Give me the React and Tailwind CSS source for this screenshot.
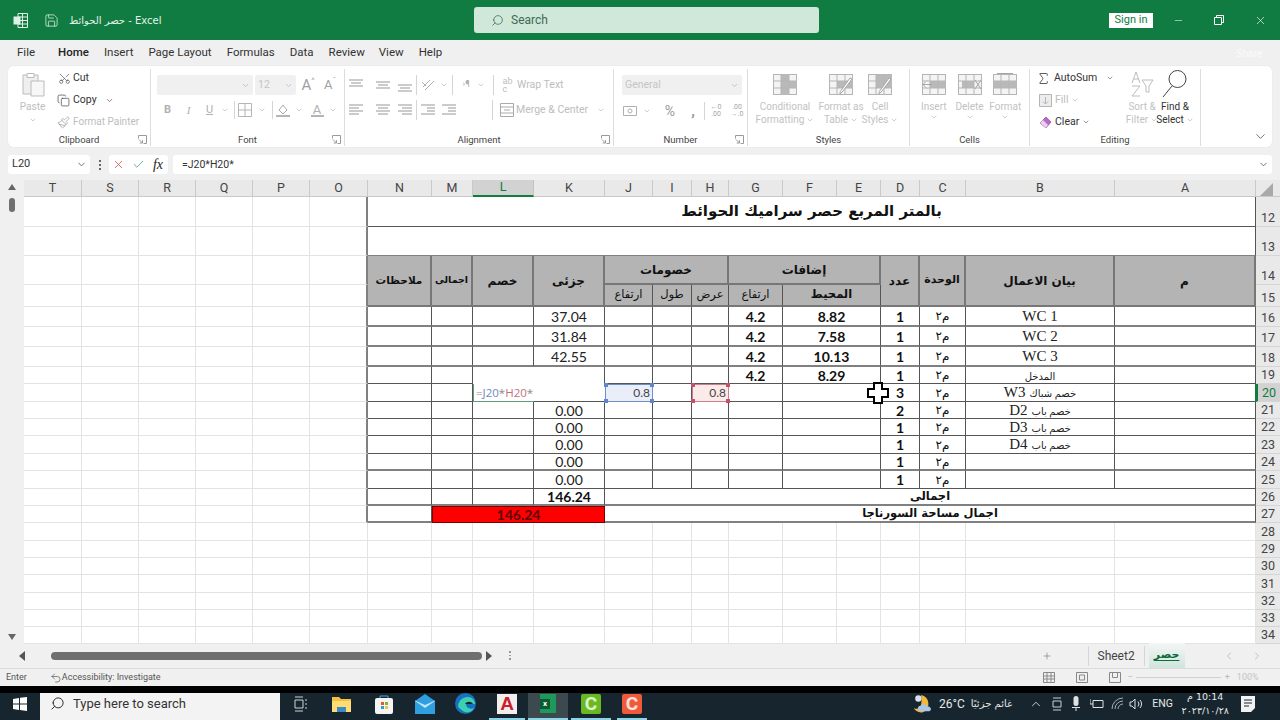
import React from "react";
import { Scissors, Copy, Paintbrush, ChevronDown, ChevronUp, ChevronLeft, ChevronRight, Search, X, Check, Minus, Plus, Sigma, Save, Undo2 } from "lucide-react";

const GRID = "border-r border-b border-[#e3e3e3]";
const V = "border-r border-r-[#555]";
const THICK = "border-b-2 border-b-[#808080]";
const THIN = "border-b border-b-[#555]";
const HEAD = "bg-[#b4b4b4] border-r-2 border-r-[#777] border-b-2 border-b-[#777] flex items-center justify-center font-bold text-[12px] text-[#111] font-['DejaVu_Sans',sans-serif]";
const SUB = "bg-[#b4b4b4] border-r border-r-[#555] border-b-2 border-b-[#777] flex items-center justify-center text-[11.5px] text-[#111] font-['DejaVu_Sans',sans-serif]";
const CENTER = "flex items-center justify-center";

const letters = ["T", "S", "R", "Q", "P", "O", "N", "M", "L", "K", "J", "I", "H", "G", "F", "E", "D", "C", "B", "A"];

const rows = [
  { n: 16, k: "37.04", g: "4.2", f: "8.82", d: "1", en: "WC 1", line: THICK },
  { n: 17, k: "31.84", g: "4.2", f: "7.58", d: "1", en: "WC 2", line: THICK },
  { n: 18, k: "42.55", g: "4.2", f: "10.13", d: "1", en: "WC 3", line: THICK },
  { n: 19, k: "", g: "4.2", f: "8.29", d: "1", ar: "المدخل", line: THIN },
  { n: 20, k: "", g: "", f: "", d: "3", ar: "خصم شباك", en: "W3", line: THIN },
  { n: 21, k: "0.00", g: "", f: "", d: "2", ar: "خصم باب", en: "D2", line: THIN },
  { n: 22, k: "0.00", g: "", f: "", d: "1", ar: "خصم باب", en: "D3", line: THIN },
  { n: 23, k: "0.00", g: "", f: "", d: "1", ar: "خصم باب", en: "D4", line: THIN },
  { n: 24, k: "0.00", g: "", f: "", d: "1", line: THICK },
  { n: 25, k: "0.00", g: "", f: "", d: "1", line: THIN },
];

// the first six columns are empty, O carries the left edge of the table
function Blanks() {
  return (
    <>
      <div className={GRID} />
      <div className={GRID} />
      <div className={GRID} />
      <div className={GRID} />
      <div className={GRID} />
      <div className="border-b border-b-[#e3e3e3] border-r-2 border-r-[#808080]" />
    </>
  );
}

function RowNo({ n, active }) {
  return (
    <div className={`flex items-end justify-center border-b border-[#d5d5d5] text-[12.5px] leading-[16px] ${active ? "bg-[#d2d2d2] text-[#107c41] border-l-2 border-l-[#107c41]" : "bg-[#e9e9e9] text-[#444]"}`}>
      {n}
    </div>
  );
}

function Handles() {
  return (
    <>
      <span className="absolute -left-[2px] -top-[2px] size-[4px] bg-current" />
      <span className="absolute -right-[2px] -top-[2px] size-[4px] bg-current" />
      <span className="absolute -left-[2px] -bottom-[2px] size-[4px] bg-current" />
      <span className="absolute -right-[2px] -bottom-[2px] size-[4px] bg-current" />
    </>
  );
}

function DataRow({ r }) {
  const cell = `${V} ${r.line}`;
  const num = `${cell} ${CENTER} font-['Lato',sans-serif] text-[14px] text-[#222]`;
  const bold = `${cell} ${CENTER} font-['Lato',sans-serif] font-bold text-[14px] text-[#111]`;
  const isEdit = r.n === 20;
  const isAbove = r.n === 19;
  return (
    <>
      <Blanks />
      <div className={cell} />
      <div className={cell} />
      {isEdit ? (
        <div className="flex items-center border-l border-b border-[#5f9c7c] pl-[2px] text-[11.5px] font-['Open_Sans',sans-serif]">
          <span className="whitespace-nowrap text-[#888]">=<span className="text-[#6f88bd]">J20</span>*<span className="text-[#c0727a]">H20</span>*</span>
        </div>
      ) : (
        <div className={isAbove ? "" : cell} />
      )}
      {isEdit ? (
        <div className={THIN} />
      ) : (
        <div className={isAbove ? V : num}>{r.k}</div>
      )}
      {isEdit ? (
        <div className="relative flex items-center justify-end border border-[#6d8fc9] bg-[#e9eef8] pr-[2px] font-['Lato',sans-serif] text-[12px] text-[#5f86c8]">
          <Handles />
          <span className="text-[#444]">0.8</span>
        </div>
      ) : (
        <div className={cell} />
      )}
      <div className={cell} />
      {isEdit ? (
        <div className="relative flex items-center justify-end border border-[#cf7f8c] bg-[#fbeaea] pr-[2px] font-['Lato',sans-serif] text-[12px] text-[#c4506a]">
          <Handles />
          <span className="text-[#444]">0.8</span>
        </div>
      ) : (
        <div className={cell} />
      )}
      <div className={bold}>{r.g}</div>
      <div className={`col-span-2 ${bold}`}>{r.f}</div>
      <div className={bold}>{r.d}</div>
      <div className={`${cell} ${CENTER} font-['DejaVu_Sans',sans-serif] text-[12px] text-[#111]`} dir="rtl">م٢</div>
      <div className={`${cell} ${CENTER} gap-[4px] font-['Liberation_Serif','DejaVu_Sans',serif] text-[#222]`} dir="rtl">
        {r.ar && <span className="pt-[2px] text-[10px]">{r.ar}</span>}
        {r.en && <span className="text-[15px]">{r.en}</span>}
      </div>
      <div className={`${r.line} ${isEdit ? "border-r border-r-[#107c41]" : "border-r border-r-[#555]"}`} />
      <RowNo n={r.n} active={isEdit} />
    </>
  );
}

function Sheet() {
  return (
    <div className="grid h-[463px] grid-cols-[58px_57px_57px_57px_57px_58px_64px_41px_61px_71px_48px_39px_37px_54px_54px_44px_39px_46px_149px_141px_24px] grid-rows-[17px_30px_29px_29px_22px_20px_20px_20px_17px_18px_17px_17px_18px_17px_18px_17px_17px_18px_17px_17px_18px_17px_17px_17px] bg-white">
      {letters.map((c) => (
        <div key={c} className={`flex items-center justify-center border-r border-b text-[12.5px] ${c === "L" ? "bg-[#d2d2d2] border-b-2 border-b-[#107c41] text-[#107c41] border-r-[#c4c4c4]" : "bg-[#e9e9e9] border-[#c9c9c9] text-[#444]"}`}>
          {c}
        </div>
      ))}
      <div className="flex items-center justify-center bg-[#e9e9e9] border-b border-[#c9c9c9]">
        <span className="mt-[3px] mr-[4px] size-0 border-b-[13px] border-l-[13px] border-b-[#a9a9a9] border-l-transparent" />
      </div>

      <Blanks />
      <div className="col-span-14 flex items-center justify-center border-r border-r-[#555] border-b border-b-[#555] pb-[1px] font-['DejaVu_Sans',sans-serif] text-[15px] font-bold text-[#111]" dir="rtl">
        بالمتر المربع حصر سراميك الحوائط
      </div>
      <RowNo n={12} />

      <Blanks />
      <div className="col-span-14 border-r border-r-[#555] border-b border-b-[#808080]" />
      <RowNo n={13} />

      <Blanks />
      <div className={`row-span-2 ${HEAD} !text-[10.5px]`}>ملاحظات</div>
      <div className={`row-span-2 ${HEAD} !text-[9.5px]`}>اجمالى</div>
      <div className={`row-span-2 ${HEAD}`}>خصم</div>
      <div className={`row-span-2 ${HEAD}`}>جزئى</div>
      <div className={`col-span-3 ${HEAD}`}>خصومات</div>
      <div className={`col-span-3 ${HEAD}`}>إضافات</div>
      <div className={`row-span-2 ${HEAD}`}>عدد</div>
      <div className={`row-span-2 ${HEAD} !text-[11px]`}>الوحدة</div>
      <div className={`row-span-2 ${HEAD}`}>بيان الاعمال</div>
      <div className={`row-span-2 ${HEAD}`}>م</div>
      <RowNo n={14} />

      <Blanks />
      <div className={SUB}>ارتفاع</div>
      <div className={SUB}>طول</div>
      <div className={SUB}>عرض</div>
      <div className={SUB}>ارتفاع</div>
      <div className={`col-span-2 ${SUB} font-bold`}>المحيط</div>
      <RowNo n={15} />

      {rows.map((r) => (
        <DataRow key={r.n} r={r} />
      ))}

      <Blanks />
      <div className={`${V} ${THICK}`} />
      <div className={`${V} ${THICK}`} />
      <div className={`${V} ${THICK}`} />
      <div className={`${V} ${THICK} ${CENTER} font-['Lato',sans-serif] text-[14px] font-bold text-[#111]`}>146.24</div>
      <div className={`col-span-10 ${THICK} border-r border-r-[#555] ${CENTER} font-['DejaVu_Sans',sans-serif] text-[11.5px] font-bold text-[#111]`}>اجمالى</div>
      <RowNo n={26} />

      <Blanks />
      <div className={`${V} border-b-2 border-b-[#808080]`} />
      <div className={`col-span-3 border border-[#7a0000] bg-[#ff0000] ${CENTER} font-['Lato',sans-serif] text-[14px] font-bold text-[#5c0505]`}>146.24</div>
      <div className={`col-span-10 border-b-2 border-b-[#808080] border-r border-r-[#555] ${CENTER} font-['DejaVu_Sans',sans-serif] text-[11.5px] font-bold text-[#111]`} dir="rtl">اجمال مساحة السورناجا</div>
      <RowNo n={27} />

      {[28, 29, 30, 31, 32, 33, 34].map((n) => (
        <React.Fragment key={n}>
          {letters.map((c) => (
            <div key={c} className={GRID} />
          ))}
          <RowNo n={n} />
        </React.Fragment>
      ))}
    </div>
  );
}

function Lines({ rows: lines }) {
  return (
    <svg width="16" height="14" viewBox="0 0 16 14" stroke="#a8a8a8" strokeWidth="1.2">
      {lines.map((l, i) => (
        <line key={i} x1={l[0]} x2={l[1]} y1={l[2]} y2={l[2]} />
      ))}
    </svg>
  );
}

function Mini({ className = "size-[9px]" }) {
  return <ChevronDown className={`${className} text-[#b5b5b5]`} strokeWidth={2} />;
}

function Launcher() {
  return (
    <svg width="9" height="9" viewBox="0 0 9 9" fill="none" stroke="#9a9a9a" strokeWidth="1">
      <path d="M.5 3.5v-3h8v8h-3M1 4.5l3.5 3.5M4.5 5.2V8H1.700" />
    </svg>
  );
}

function Group({ w, label, launcher, children }) {
  return (
    <div className={`${w} flex h-[77px] shrink-0 flex-col border-r border-[#dcdcdc]`}>
      <div className="flex-1">{children}</div>
      <div className="relative flex h-[12px] items-center justify-center text-[9.5px] leading-[12px] text-[#444]">
        {label}
        {launcher && (
          <span className="absolute right-[3px] top-[1px]">
            <Launcher />
          </span>
        )}
      </div>
    </div>
  );
}

function GridIcon({ w = 24, fills = [], extra }) {
  return (
    <svg width={w} height="22" viewBox={`0 0 ${w} 22`} fill="#f4f4f4" stroke="#b5b5b5" strokeWidth="1">
      <rect x=".5" y="1.500" width="23" height="20" />
      {fills.map((f, i) => (
        <rect key={i} x={f[0]} y={f[1]} width={f[2]} height={f[3]} fill="#b9b9b9" stroke="none" />
      ))}
      <path d="M.5 8h23M.5 15h23M8 1.500v20M16 1.500v20" fill="none" />
      {extra}
    </svg>
  );
}

const brush = <path d="M23 6L14 18l-3 3c0-2 .5-3 1.500-4L21 5z" fill="#fff" stroke="#a5a5a5" />;

function BigButton({ w, icon, top, bottom, dark }) {
  return (
    <div className={`${w} flex flex-col items-center text-[10px] leading-[13px] ${dark ? "text-[#333]" : "text-[#c2c2c2]"}`}>
      <span className="flex h-[30px] items-center">{icon}</span>
      <span className="mt-[1px] whitespace-nowrap">{top}</span>
      <span className="flex items-center gap-[2px] whitespace-nowrap">
        {bottom}
        <Mini className="size-[8px]" />
      </span>
    </div>
  );
}

function Ribbon() {
  const tl = [[1, 15, 2], [3, 13, 5], [1, 15, 8]];
  const mid = [[1, 15, 4], [3, 13, 7], [1, 15, 10]];
  const bot = [[1, 15, 7], [3, 13, 10], [1, 15, 13]];
  const l1 = [[1, 15, 2], [1, 11, 5], [1, 15, 8], [1, 11, 11]];
  const l2 = [[1, 15, 2], [3, 13, 5], [1, 15, 8], [3, 13, 11]];
  const l3 = [[1, 15, 2], [5, 15, 5], [1, 15, 8], [5, 15, 11]];
  const ind = [[1, 15, 2], [7, 15, 5], [7, 15, 8], [1, 15, 11]];
  return (
    <div className="mx-[8px] flex h-[81px] w-[1264px] rounded-[5px] bg-white pt-[3px] shadow-[0_0_1px_#ccc]">
      <Group w="w-[143px]" label="Clipboard" launcher>
        <div className="flex">
          <div className="flex w-[49px] flex-col items-center pt-[2px] text-[10px] leading-[13px] text-[#bdbdbd]">
            <svg width="26" height="26" viewBox="0 0 26 26" fill="#efefef" stroke="#bbb">
              <path d="M3 4h15v19H3z" />
              <path d="M7 2.500h7v4H7z" fill="#fff" />
              <path d="M11 10h13v15H11z" fill="#f7f7f7" />
            </svg>
            <span className="mt-[3px]">Paste</span>
            <Mini className="mt-[3px] size-[8px]" />
          </div>
          <div className="flex flex-col gap-[4px] text-[10.5px] leading-[18px] text-[#333]">
            <div className="flex h-[18px] items-center gap-[2px] pl-[1px]">
              <Scissors className="size-[13px] -rotate-90 text-[#555]" strokeWidth={1.3} />
              <span>Cut</span>
            </div>
            <div className="flex h-[18px] items-center gap-[3px]">
              <Copy className="size-[13px] text-[#444]" strokeWidth={1.3} />
              <span>Copy</span>
              <ChevronDown className="ml-[5px] size-[9px] text-[#666]" />
            </div>
            <div className="flex h-[18px] items-center gap-[3px] text-[#bdbdbd]">
              <Paintbrush className="size-[13px] text-[#a5a5a5]" strokeWidth={1.5} />
              <span className="whitespace-nowrap text-[10px]">Format Painter</span>
            </div>
          </div>
        </div>
      </Group>

      <Group w="w-[194px]" label="Font" launcher>
        <div className="flex items-center pl-[6px] pt-[6px]">
          <div className="flex h-[20px] w-[96px] items-center justify-end rounded-[2px] bg-[#f0f0f0] pr-[3px]"><Mini /></div>
          <div className="ml-[2px] flex h-[20px] w-[41px] items-center justify-between rounded-[2px] bg-[#f0f0f0] px-[3px] text-[10.5px] text-[#c5c5c5]">12<Mini /></div>
          <span className="ml-[2px] flex w-[20px] items-start justify-center text-[15px] leading-[18px] text-[#a0a0a0]">A<span className="text-[8px] leading-[10px]">^</span></span>
          <span className="ml-[2px] flex w-[20px] items-start justify-center text-[13px] leading-[18px] text-[#a0a0a0]">A<span className="text-[8px] leading-[10px]">ˇ</span></span>
        </div>
        <div className="mt-[5px] flex h-[20px] items-center pl-[6px] text-[11px] text-[#b0b0b0]">
          <span className="w-[21px] text-center font-bold">B</span>
          <span className="w-[21px] text-center italic font-['Liberation_Serif',serif]">I</span>
          <span className="w-[21px] text-center underline">U</span>
          <span className="flex w-[10px] justify-center"><Mini className="size-[8px]" /></span>
          <span className="ml-[4px] h-[18px] border-l border-[#d5d5d5]" />
          <span className="ml-[2px] flex w-[16px] justify-center">
            <svg width="14" height="14" viewBox="0 0 14 14" fill="none" stroke="#b5b5b5"><path d="M.5.5h13v13H.5zM7 .5v13M.5 7h13" /></svg>
          </span>
          <span className="ml-[3px] flex w-[12px] justify-center"><Mini className="size-[8px]" /></span>
          <span className="ml-[4px] h-[18px] border-l border-[#d5d5d5]" />
          <span className="ml-[2px] flex w-[16px] justify-center">
            <svg width="14" height="15" viewBox="0 0 14 15" fill="none" stroke="#aaa"><path d="M3 7l4-5 4 5-4 4z" /><path d="M0 13h14" strokeWidth="2" stroke="#b4b4b4" /></svg>
          </span>
          <span className="ml-[2px] flex w-[12px] justify-center"><Mini className="size-[8px]" /></span>
          <span className="ml-[4px] flex w-[16px] flex-col items-center leading-[11px] text-[13px]">A<span className="h-[2px] w-[13px] bg-[#b4b4b4]" /></span>
          <span className="ml-[2px] flex w-[12px] justify-center"><Mini className="size-[8px]" /></span>
        </div>
      </Group>

      <Group w="w-[269px]" label="Alignment" launcher>
        <div className="flex h-[30px] items-center pt-[2px]">
          <span className="flex w-[22px] justify-center"><Lines rows={tl} /></span>
          <span className="ml-[5px] flex w-[22px] justify-center"><Lines rows={mid} /></span>
          <span className="flex w-[22px] justify-center"><Lines rows={bot} /></span>
          <span className="h-[20px] border-l border-[#d5d5d5]" />
          <span className="flex w-[22px] justify-center">
            <svg width="15" height="14" viewBox="0 0 15 14" fill="none" stroke="#b0b0b0"><path d="M2 9L9 2M4 12l9-9M1 4l4 4" /></svg>
          </span>
          <span className="flex w-[10px] justify-center"><Mini className="size-[8px]" /></span>
          <span className="ml-[3px] h-[20px] border-l border-[#d5d5d5]" />
          <span className="ml-[3px] flex w-[20px] justify-center text-[9px] text-[#b0b0b0]">›¶</span>
          <span className="flex w-[10px] justify-center"><Mini className="size-[8px]" /></span>
          <span className="ml-[7px] h-[20px] border-l border-[#d5d5d5]" />
          <div className="ml-[5px] flex items-center gap-[1px] text-[10.5px] text-[#bdbdbd]">
            <span className="flex w-[17px] justify-center text-[9px] leading-[8px]">ab<br />c</span>
            <span>Wrap Text</span>
          </div>
        </div>
        <div className="flex h-[22px] items-center">
          <span className="flex w-[22px] justify-center"><Lines rows={l1} /></span>
          <span className="ml-[5px] flex w-[22px] justify-center"><Lines rows={l2} /></span>
          <span className="flex w-[22px] justify-center"><Lines rows={l3} /></span>
          <span className="h-[20px] border-l border-[#d5d5d5]" />
          <span className="flex w-[22px] justify-center"><Lines rows={ind} /></span>
          <span className="flex w-[20px] justify-center"><Lines rows={ind} /></span>
          <span className="ml-[33px] h-[20px] border-l border-[#d5d5d5]" />
          <div className="ml-[5px] flex items-center gap-[1px] text-[10.5px] text-[#bdbdbd]">
            <span className="flex w-[17px] justify-center">
              <svg width="14" height="14" viewBox="0 0 14 14" fill="none" stroke="#aaa"><path d="M.5.5h13v13H.5zM.5 4h13M.5 10h13M4 7h6" /></svg>
            </span>
            <span className="whitespace-nowrap">Merge &amp; Center</span>
            <Mini className="ml-[8px] size-[8px]" />
          </div>
        </div>
      </Group>

      <Group w="w-[134px]" label="Number" launcher>
        <div className="pl-[8px] pt-[6px]">
          <div className="flex h-[20px] w-[120px] items-center justify-between rounded-[2px] bg-[#f0f0f0] px-[3px] text-[10.5px] text-[#c5c5c5]">General<Mini /></div>
        </div>
        <div className="mt-[6px] flex h-[20px] items-center pl-[8px] text-[#8a8a8a]">
          <span className="flex w-[16px] justify-center">
            <svg width="14" height="14" viewBox="0 0 14 14" fill="none" stroke="#b0b0b0"><path d="M.5 2.500h13v9H.5z" /><circle cx="7" cy="7" r="2" /></svg>
          </span>
          <span className="ml-[4px] flex w-[10px] justify-center"><Mini className="size-[8px]" /></span>
          <span className="ml-[9px] w-[18px] text-center text-[14px] text-[#999]">%</span>
          <span className="ml-[5px] w-[18px] text-center text-[15px] font-bold leading-[14px] text-[#999]">,</span>
          <span className="ml-[2px] h-[18px] border-l border-[#d5d5d5]" />
          <span className="ml-[1px] w-[20px] text-center text-[7px] leading-[7px] text-[#a5a5a5]">←0<br />.00</span>
          <span className="ml-[1px] w-[20px] text-center text-[7px] leading-[7px] text-[#a5a5a5]">.00<br />→.0</span>
        </div>
      </Group>

      <Group w="w-[162px]" label="Styles">
        <div className="flex">
          <BigButton w="w-[74px]" icon={<GridIcon fills={[[8, 1, 8, 7], [8, 8, 16, 7], [8, 15, 8, 7]]} />} top="Conditional" bottom="Formatting" />
          <BigButton w="w-[38px]" icon={<GridIcon fills={[[8, 8, 16, 7]]} extra={brush} />} top="Format as" bottom="Table" />
          <BigButton w="w-[40px]" icon={<GridIcon fills={[[8, 1, 16, 14]]} extra={brush} />} top="Cell" bottom="Styles" />
        </div>
      </Group>

      <Group w="w-[120px]" label="Cells">
        <div className="flex">
          <BigButton w="w-[48px]" icon={<GridIcon fills={[[8, 8, 16, 7]]} extra={<path d="M10 11.500H1M5 7.500l-4 4 4 4" fill="#fff" stroke="#a5a5a5" />} />} top="Insert" />
          <BigButton w="w-[24px]" icon={<GridIcon fills={[[4, 8, 12, 7]]} extra={<path d="M17 7l6 9M23 7l-6 9" fill="none" stroke="#a5a5a5" />} />} top="Delete" />
          <BigButton w="w-[48px]" icon={<GridIcon fills={[[0, 8, 24, 7]]} extra={<path d="M4 .5h16" stroke="#a5a5a5" />} />} top="Format" />
        </div>
      </Group>

      <Group w="w-[171px]" label="Editing">
        <div className="flex">
          <div className="flex w-[95px] flex-col gap-[4px] pl-[6px] text-[10.5px] leading-[18px] text-[#333]">
            <div className="flex h-[18px] items-center gap-[3px]">
              <Sigma className="size-[15px] text-[#444]" strokeWidth={1.4} />
              <span>AutoSum</span>
              <ChevronDown className="ml-[6px] size-[8px] text-[#666]" />
            </div>
            <div className="flex h-[18px] items-center gap-[3px] pl-[3px] text-[#bdbdbd]">
              <svg width="13" height="13" viewBox="0 0 13 13" fill="#ececec" stroke="#b5b5b5"><path d="M.5.5h12v12H.5z" /><path d="M6.500 3v7M4 7.500l2.500 2.500L9 7.500" fill="none" /></svg>
              <span>Fill</span>
              <Mini className="size-[8px]" />
            </div>
            <div className="flex h-[18px] items-center gap-[3px] pl-[3px]">
              <svg width="13" height="13" viewBox="0 0 13 13"><path d="M7 1l5 5-5 6-6-5z" fill="#b66bc2" stroke="#8e4a9a" strokeWidth=".7" /><path d="M1 7l3-3 5 5-2 3z" fill="#eccdf0" /></svg>
              <span>Clear</span>
              <ChevronDown className="size-[8px] text-[#666]" />
            </div>
          </div>
          <BigButton
            w="w-[34px]"
            icon={<svg width="24" height="28" viewBox="0 0 24 28" fill="none" stroke="#bdbdbd"><path d="M2 13L6 2l4 11M3.500 9h5M2 16h8L2 26h8M12 10h11l-4 6v6h-3v-6z" /></svg>}
            top="Sort &"
            bottom="Filter"
          />
          <BigButton
            w="w-[32px]"
            dark
            icon={<svg width="26" height="30" viewBox="0 0 26 30" fill="none" stroke="#444"><circle cx="15.500" cy="10" r="8.500" /><path d="M10 17L1 28" /></svg>}
            top="Find &"
            bottom="Select"
          />
        </div>
      </Group>
      <div className="flex flex-1 items-end justify-end pb-[3px] pr-[4px]">
        <ChevronDown className="size-[15px] text-[#555]" strokeWidth={1.3} />
      </div>
    </div>
  );
}

function Running() {
  return <span className="absolute -bottom-[6px] left-[3px] right-[3px] h-[2px] bg-[#8fd3e8]" />;
}

function Taskbar() {
  return (
    <div className="flex h-[27px] items-center bg-[#17262e] pb-[6px] text-white">
      <div className="flex w-[40px] justify-center">
        <svg width="14" height="14" viewBox="0 0 14 14" fill="#fff"><path d="M0 2l6-1v5.500H0zM7 .8L14 0v6.500H7zM0 7.500h6V13l-6-1zM7 7.500h7V14l-7-1z" /></svg>
      </div>
      <div className="-mb-[6px] flex h-[27px] w-[240px] items-center gap-[8px] bg-[#f3f3f3] pb-[6px] pl-[10px] text-[13px] text-[#333]">
        <Search className="size-[15px] -scale-x-100 text-[#222]" strokeWidth={1.5} />
        Type here to search
      </div>
      <div className="flex w-[40px] justify-center">
        <svg width="14" height="16" viewBox="0 0 14 16" fill="none" stroke="#cfd4d6"><path d="M2 1h8M2 15h8M2 4h8v8H2zM13 3v2M13 7v2M13 11v2" /></svg>
      </div>
      <div className="flex w-[43px] justify-center">
        <svg width="19" height="17" viewBox="0 0 19 17"><path d="M0 2h7l2 2h10v13H0z" fill="#f4c23e" /><path d="M0 6h19v11H0z" fill="#ffdc75" /><path d="M5 17v-5h9v5" fill="#3a8ac4" /></svg>
      </div>
      <div className="flex w-[41px] justify-center">
        <svg width="18" height="20" viewBox="0 0 18 20"><path d="M5 5V2h8v3" fill="none" stroke="#4aa8d8" /><rect y="4" width="18" height="16" rx="2" fill="#f4f4f4" /><rect x="6" y="8" width="3" height="3" fill="#e8552c" /><rect x="10" y="8" width="3" height="3" fill="#7fb82e" /><rect x="6" y="12" width="3" height="3" fill="#2d9cdb" /><rect x="10" y="12" width="3" height="3" fill="#f4c23e" /></svg>
      </div>
      <div className="flex w-[41px] justify-center">
        <svg width="20" height="20" viewBox="0 0 20 20"><path d="M0 7l10-7 10 7v13H0z" fill="#2f9fe0" /><path d="M0 7l10 7 10-7v-.5L10 11 0 6.500z" fill="#bfe6fa" /></svg>
      </div>
      <div className="flex w-[41px] justify-center">
        <svg width="21" height="21" viewBox="0 0 21 21"><circle cx="10.500" cy="10.500" r="10.500" fill="#1770c0" /><path d="M3 13C4 6 9 4 13 4c4 0 7 3 7 7h-9c0 3 3 6 8 4-2 4-7 6-11 3-3-2-5-4-5-5z" fill="#3bd0b0" /><path d="M10 11c2-3 6-3 8 0z" fill="#17262e" /></svg>
      </div>
      <div className="relative flex w-[42px] justify-center">
        <div className="flex h-[20px] w-[20px] items-center justify-center bg-[#f3eeee] font-['Liberation_Sans',sans-serif] text-[19px] font-bold leading-none text-[#c8202c]">A</div>
        <Running />
      </div>
      <div className="relative -mb-[6px] flex h-[27px] w-[40px] items-center justify-center bg-[#3c4a50] pb-[6px]">
        <div className="flex h-[19px] w-[16px] items-center bg-[#1d9a5a]">
          <span className="flex size-[10px] items-center justify-center bg-[#0b5c32] text-[8px] font-bold text-white">x</span>
        </div>
        <span className="absolute bottom-0 left-0 right-0 h-[2px] bg-[#8fd3e8]" />
      </div>
      <div className="relative flex w-[46px] justify-center">
        <div className="flex h-[20px] w-[20px] items-center justify-center rounded-[2px] bg-[#69b922] text-[19px] font-bold leading-none text-[#dff3c8]">C</div>
        <Running />
      </div>
      <div className="relative flex w-[36px] justify-center">
        <div className="flex h-[20px] w-[20px] items-center justify-center rounded-[2px] bg-[#ef5a3c] text-[19px] font-bold leading-none text-[#fde0d8]">C</div>
        <Running />
      </div>

      <div className="ml-[262px] flex w-[20px] justify-center">
        <svg width="20" height="20" viewBox="0 0 20 22"><path d="M9 1a10 10 0 0 1 2 19C7 21 3 19 1 16c6 1 10-2 8-15z" fill="#f0b93a" /><circle cx="6" cy="5" r="3.500" fill="#d6e3ef" /><path d="M8 19a3 3 0 0 1 1-6 4 4 0 0 1 7 1 2.500 2.500 0 0 1 2 5z" fill="#a8c6e8" /></svg>
      </div>
      <span className="ml-[7px] text-[12px] text-[#e8e8e8]">26°C</span>
      <span className="ml-[6px] whitespace-nowrap font-['DejaVu_Sans',sans-serif] text-[10px] text-[#e8e8e8]" dir="rtl">غائم جزئيًا</span>
      <ChevronUp className="ml-[17px] size-[14px] text-[#dfe2e3]" strokeWidth={1.5} />
      <span className="ml-[8px] flex w-[12px] justify-center">
        <svg width="10" height="14" viewBox="0 0 10 14" fill="none" stroke="#ccd"><path d="M1 1h8M1 13h8M1 4h8v6H1z" /></svg>
      </span>
      <span className="ml-[8px] flex w-[10px] justify-center">
        <svg width="8" height="15" viewBox="0 0 8 15" fill="#dfe2e3"><rect x="1.500" width="5" height="10" rx="2.500" /><path d="M0 11h8v1H0zM3.500 12h1v3h-1z" /></svg>
      </span>
      <span className="ml-[9px] flex w-[14px] justify-center">
        <svg width="14" height="10" viewBox="0 0 14 10" fill="none" stroke="#dfe2e3"><path d="M3 1.500h10v7H3zM0 0v5h3" /></svg>
      </span>
      <span className="ml-[6px] flex w-[14px] justify-center">
        <svg width="13" height="13" viewBox="0 0 13 13" fill="none" stroke="#aab"><path d="M1 12A11 11 0 0 1 12 1M4 12a8 8 0 0 1 8-8M7 12a5 5 0 0 1 5-5" /></svg>
      </span>
      <span className="ml-[5px] flex w-[14px] justify-center">
        <svg width="14" height="12" viewBox="0 0 14 12" fill="none" stroke="#dfe2e3"><path d="M1 4h2l3-3v10L3 8H1zM9 3.500a4 4 0 0 1 0 5M11 2a6 6 0 0 1 0 8" /></svg>
      </span>
      <span className="ml-[9px] w-[21px] text-[10.5px] text-[#e8e8e8]">ENG</span>
      <div className="ml-[2px] flex w-[60px] flex-col items-center font-['DejaVu_Sans',sans-serif] text-[9.5px] leading-[14px] text-[#e8e8e8]">
        <span dir="rtl">10:14 م</span>
        <span>٢٠٢٣/١٠/٢٨</span>
      </div>
      <span className="ml-[3px] flex w-[20px] justify-center">
        <svg width="14" height="16" viewBox="0 0 14 16" fill="#f2f2f2"><path d="M0 0h14v12l-4 4H0z" /><path d="M3 4h8M3 7h8M3 10h5" stroke="#17262e" /></svg>
      </span>
    </div>
  );
}

export default function App() {
  return (
    <div className="relative flex h-[720px] w-[1280px] flex-col overflow-hidden bg-[#f0f0f0] font-['Roboto',sans-serif]">
      <div className="flex h-[40px] shrink-0 items-center bg-[#107c41] text-white">
        <div className="flex w-[38px] justify-center pl-[2px]">
          <svg width="15" height="15" viewBox="0 0 15 15" fill="none" stroke="#dff0e6"><path d="M5 .5h9.500v14H5zM5 4h9.500M5 7.500h9.500M5 11h9.500M9.500.5v14" /><rect x=".5" y="3.500" width="7" height="8" fill="#dff0e6" stroke="none" /></svg>
        </div>
        <Save className="ml-[6px] size-[15px] text-[#e4f1ea]" strokeWidth={1.2} />
        <span className="ml-[10px] w-[100px] whitespace-nowrap text-[10px] text-[#e4f1ea] font-['DejaVu_Sans','Roboto',sans-serif]">حصر الحوائط  -  Excel</span>
        <div className="ml-[305px] flex h-[26px] w-[345px] items-center gap-[7px] rounded-[3px] bg-[#cfe8da] pl-[17px] text-[12px] text-[#3f6a53]">
          <Search className="size-[13px] -scale-x-100" strokeWidth={1.4} />
          Search
        </div>
        <div className="ml-[290px] flex h-[15px] w-[44px] items-center justify-center bg-white text-[11px] text-[#107c41]">Sign in</div>
        <Minus className="ml-[20px] size-[11px]" strokeWidth={1.2} />
        <svg className="ml-[30px]" width="10" height="10" viewBox="0 0 10 10" fill="none" stroke="#fff"><path d="M.5 2.500h7v7h-7zM2.500 2.500V.5h7v7H7.500" /></svg>
        <X className="ml-[30px] size-[13px]" strokeWidth={1.2} />
      </div>

      <div className="flex h-[26px] shrink-0 items-center justify-between pl-[17px] pr-[18px] text-[11.5px] text-[#333]">
        <div className="flex items-center">
          <span>File</span>
          <span className="ml-[23px] font-medium text-[#222]">Home</span>
          <span className="ml-[15px]">Insert</span>
          <span className="ml-[15px]">Page Layout</span>
          <span className="ml-[15px]">Formulas</span>
          <span className="ml-[15px]">Data</span>
          <span className="ml-[15px]">Review</span>
          <span className="ml-[14px]">View</span>
          <span className="ml-[15px]">Help</span>
        </div>
        <span className="text-[10px] text-[#fafafa]">Share</span>
      </div>

      <Ribbon />

      <div className="mt-[8px] flex h-[19px] shrink-0 items-stretch px-[8px] text-[11px] text-[#333]">
        <div className="flex w-[82px] items-center justify-between rounded-[3px] bg-white pl-[4px] pr-[3px]">
          L20
          <ChevronDown className="size-[11px] text-[#666]" />
        </div>
        <div className="flex w-[19px] flex-col items-center justify-center gap-[2px]">
          <span className="size-[2px] bg-[#666]" />
          <span className="size-[2px] bg-[#666]" />
          <span className="size-[2px] bg-[#666]" />
        </div>
        <div className="flex w-[59px] items-center justify-between rounded-[3px] bg-white px-[3px]">
          <X className="size-[13px] text-[#d24a3f]" strokeWidth={1.4} />
          <Check className="size-[13px] text-[#3d9a5f]" strokeWidth={1.4} />
          <span className="pr-[2px] font-['Liberation_Serif',serif] text-[14px] italic text-[#222]">fx</span>
        </div>
        <div className="ml-[5px] flex flex-1 items-center justify-between rounded-[3px] bg-white pl-[9px] pr-[3px] text-[10.5px]">
          =J20*H20*
          <ChevronDown className="size-[11px] text-[#666]" />
        </div>
      </div>

      <div className="mt-[6px] flex shrink-0">
        <div className="flex h-[463px] w-[24px] shrink-0 flex-col items-center bg-[#f0f0f0] pr-[1px] text-[#666]">
          <span className="mt-[4px] size-0 border-x-[4px] border-b-[6px] border-x-transparent border-b-[#666]" />
          <span className="mt-[8px] h-[14px] w-[6px] rounded-full bg-[#6f6f6f]" />
          <span className="mt-auto mb-[3px] size-0 border-x-[4px] border-t-[6px] border-x-transparent border-t-[#666]" />
        </div>
        <Sheet />
      </div>

      <div className="flex h-[25px] shrink-0 items-center text-[12px] text-[#444]">
        <span className="ml-[19px] size-0 border-y-[5px] border-r-[6px] border-y-transparent border-r-[#555]" />
        <span className="ml-[26px] h-[8px] w-[431px] rounded-full bg-[#6f6f6f]" />
        <span className="ml-[4px] size-0 border-y-[5px] border-l-[6px] border-y-transparent border-l-[#555]" />
        <span className="ml-[17px] flex flex-col gap-[2px]">
          <span className="size-[1.5px] bg-[#999]" />
          <span className="size-[1.5px] bg-[#999]" />
          <span className="size-[1.5px] bg-[#999]" />
        </span>
        <Plus className="ml-[531px] size-[10px] text-[#777]" strokeWidth={1.5} />
        <span className="ml-[36px] h-[20px] border-l border-[#d5d5d5]" />
        <span className="ml-[9px] text-[12px] text-[#444]">Sheet2</span>
        <span className="ml-[9px] h-[20px] border-l border-[#d5d5d5]" />
        <span className="ml-[4px] flex h-full w-[36px] items-center justify-center bg-gradient-to-b from-[#f4f6f5] to-[#cfe5dc] font-['DejaVu_Sans',sans-serif] text-[11px] font-bold text-[#0f6b3a] underline underline-offset-2">حصر</span>
        <ChevronLeft className="ml-[38px] size-[12px] text-[#c2c2c2]" />
        <ChevronRight className="ml-[16px] size-[12px] text-[#c2c2c2]" />
      </div>

      <div className="flex h-[18px] shrink-0 items-center border-t border-[#dbdbdb] text-[9px] text-[#555]">
        <span className="ml-[6px]">Enter</span>
        <Undo2 className="ml-[23px] size-[12px] text-[#555]" strokeWidth={1.4} />
        <span>Accessibility: Investigate</span>
        <span className="ml-[881px] flex w-[14px] justify-center">
          <svg width="12" height="11" viewBox="0 0 12 11" fill="none" stroke="#888"><path d="M.5.5h11v10H.5zM4 .5v10M8 .5v10M.5 4h11M.5 7h11" /></svg>
        </span>
        <span className="ml-[19px] flex w-[14px] justify-center">
          <svg width="12" height="11" viewBox="0 0 12 11" fill="none" stroke="#888"><path d="M.5.5h11v10H.5zM3.500 3h5v5h-5z" /></svg>
        </span>
        <span className="ml-[19px] flex w-[14px] justify-center">
          <svg width="12" height="11" viewBox="0 0 12 11" fill="none" stroke="#888"><path d="M.5.5h11v10H.5zM3.500.5v5h5v-5" /></svg>
        </span>
        <span className="ml-[6px] text-[#bbb]">−</span>
        <span className="ml-[3px] h-px w-[85px] bg-[#d0d0d0]" />
        <span className="ml-[4px] text-[#bbb]">+</span>
        <span className="ml-[7px] text-[9px] text-[#c4c4c4]">100%</span>
      </div>

      <div className="h-[7px] shrink-0 bg-black" />
      <Taskbar />

      <svg className="absolute left-[866px] top-[381px]" width="24" height="24" viewBox="0 0 24 24" fill="#fff" stroke="#000" strokeWidth="2">
        <path d="M8 2h8v6h6v8h-6v6H8v-6H2V8h6z" />
      </svg>
    </div>
  );
}
